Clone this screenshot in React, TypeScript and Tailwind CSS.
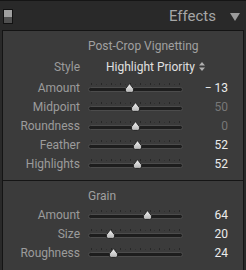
import React from 'react';

const font = { fontFamily: 'Roboto, "Noto Sans", sans-serif' };

const Thumb = () => (
    <svg width="11" height="10" viewBox="0 0 11 10">
        <defs>
            <linearGradient id="tg" x1="0" y1="0" x2="0" y2="1">
                <stop offset="0" stopColor="#f4f4f4" />
                <stop offset="1" stopColor="#b4b4b4" />
            </linearGradient>
        </defs>
        <path d="M5.5 0.6 L9.4 5.6 Q10.6 9.4 7.8 9.4 L3.2 9.4 Q0.4 9.4 1.6 5.6 Z" fill="url(#tg)" stroke="#1a1a1a" strokeWidth="0.9" />
    </svg>
);

const Slider = ({ pos }: { pos: number }) => (
    <div className="relative w-[95px] h-[19px] flex flex-col pt-[5px]">
        <div className="flex justify-between px-[3px] h-[2px]">
            {Array.from({ length: 19 }).map((_, i) => (
                <span key={i} className={`w-px ${i % 2 === 0 ? 'h-[2px] bg-[#272727]' : 'h-px mt-px bg-[#303030]'}`}></span>
            ))}
        </div>
        <div className="mt-[2px] h-[5px] rounded-full bg-[#1d1d1d] border border-[#4c4c4c]"></div>
        <div className="absolute top-[5px]" style={{ left: 5 + pos * 85 - 5.5 }}>
            <Thumb />
        </div>
    </div>
);

const Row = ({ label, pos, value, dim }: { label: string; pos: number; value: string; dim?: boolean }) => (
    <div className="flex items-center h-[19px] text-[12px]">
        <span className="w-[77px] text-right text-[#9c9c9c]">{label}</span>
        <span className="ml-[8px]">
            <Slider pos={pos} />
        </span>
        <span className={`w-[45px] text-right ${dim ? 'text-[#777]' : 'text-[#ececec]'}`}>{value}</span>
    </div>
);

export default function App() {
    return (
        <div className="w-[246px] h-[270px] overflow-hidden bg-[#292929] border-t border-[#151515]" style={font}>
            <div className="h-[29px] flex items-start pt-[8px] pl-[3px] pr-[6px]">
                <div className="w-[10px] h-[15px] border border-[#111] flex flex-col">
                    <div className="h-1/2 bg-[#a0a0a0]"></div>
                    <div className="h-1/2 bg-[#505050]"></div>
                </div>
                <span className="ml-auto text-[15px] leading-[15px] text-[#a6a6a6]">Effects</span>
                <svg className="ml-[14px] mt-[4px]" width="10" height="8" viewBox="0 0 10 8">
                    <path d="M0 0 H10 L5 8 Z" fill="#9c9c9c" />
                </svg>
            </div>
            <div className="mx-[2px] h-[241px] bg-[#3b3b3b] border-x border-t border-[#141414]">
                <div className="pt-[5px] pb-[7px]">
                    <div className="h-[19px] flex items-center pl-[85px] text-[12px] text-[#a0a0a0]">Post-Crop Vignetting</div>
                    <div className="mt-[2px] h-[19px] flex items-center text-[12px]">
                        <span className="w-[77px] text-right text-[#9c9c9c]">Style</span>
                        <span className="ml-[26px] text-[#e0e0e0]">Highlight Priority</span>
                        <svg className="ml-[4px]" width="6" height="9" viewBox="0 0 6 9">
                            <path d="M3 0 L6 3.5 H0 Z M3 9 L6 5.5 H0 Z" fill="#b0b0b0" />
                        </svg>
                    </div>
                    <div className="mt-[2px]">
                        <Row label="Amount" pos={0.435} value="− 13" />
                        <Row label="Midpoint" pos={0.5} value="50" dim />
                        <Row label="Roundness" pos={0.5} value="0" dim />
                        <Row label="Feather" pos={0.52} value="52" />
                        <Row label="Highlights" pos={0.52} value="52" />
                    </div>
                </div>
                <div className="h-px bg-[#151515]"></div>
                <div className="pt-[5px]">
                    <div className="h-[19px] flex items-center pl-[85px] text-[12px] text-[#a0a0a0]">Grain</div>
                    <Row label="Amount" pos={0.64} value="64" />
                    <Row label="Size" pos={0.2} value="20" />
                    <Row label="Roughness" pos={0.24} value="24" />
                </div>
            </div>
        </div>
    );
}
